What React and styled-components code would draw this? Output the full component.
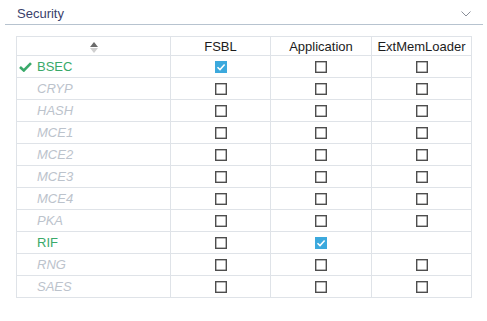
import React from "react";
import styled, { createGlobalStyle } from "styled-components";

const GlobalStyle = createGlobalStyle`
  body {
    margin: 0;
    background: #ffffff;
    font-family: "Liberation Sans", Arial, sans-serif;
  }
`;

const Panel = styled.div`
  width: 487px;
  height: 321px;
  background: #ffffff;
`;

const SectionHeader = styled.div`
  display: flex;
  align-items: center;
  justify-content: space-between;
  height: 25px;
  margin: 0 4px 0 5px;
  padding: 3px 12px 0 12px;
  border-bottom: 1px solid #b7c3cf;
  box-sizing: border-box;
`;

const Title = styled.span`
  font-size: 13px;
  color: #3a416b;
`;

const Table = styled.table`
  border-collapse: collapse;
  margin: 11px 0 0 16px;
  table-layout: fixed;
  width: 456px;
  font-size: 13px;
`;

const Th = styled.th`
  height: 18px;
  padding: 0;
  border: 1px solid #dfe3e8;
  font-weight: normal;
  color: #1c1c1c;
  text-align: center;
  width: ${(p) => p.$w}px;
  vertical-align: middle;
`;

const Td = styled.td`
  height: 21px;
  padding: 0;
  border: 1px solid #dfe3e8;
  text-align: center;
  vertical-align: middle;
`;

const NameCell = styled(Td)`
  text-align: left;
  position: relative;
  padding-left: 20px;
`;

const Name = styled.span`
  color: ${(p) => (p.$on ? "#3aa96a" : "#bcc3cc")};
  font-style: ${(p) => (p.$on ? "normal" : "italic")};
`;

const Tick = styled.svg`
  position: absolute;
  left: 2px;
  top: 6px;
`;

const Box = styled.svg`
  display: inline-block;
  vertical-align: middle;
  margin-top: -2px;
`;

const Chevron = () => (
  <svg width="10" height="6" viewBox="0 0 10 6">
    <path d="M0.5 0.5 L5 5 L9.5 0.5" fill="none" stroke="#8a8f99" strokeWidth="1" />
  </svg>
);

const SortIcon = () => (
  <svg width="8" height="11" viewBox="0 0 8 11" style={{ verticalAlign: "middle" }}>
    <path d="M4 0 L8 5 L0 5 Z" fill="#6b6b6b" />
    <path d="M0 6 L8 6 L4 11 Z" fill="#cfcfcf" />
  </svg>
);

const Checkbox = ({ checked }) => (
  <Box width="12" height="12" viewBox="0 0 12 12">
    {checked ? (
      <>
        <rect x="0" y="0" width="12" height="12" fill="#3ca9dd" />
        <path d="M2.5 6.2 L5 8.6 L9.6 3.6" fill="none" stroke="#ffffff" strokeWidth="1.5" />
      </>
    ) : (
      <rect x="0.7" y="0.7" width="10.6" height="10.6" fill="#ffffff" stroke="#4e4e4e" strokeWidth="1.4" />
    )}
  </Box>
);

const rows = [
  { name: "BSEC", on: true, cells: [true, false, false] },
  { name: "CRYP", cells: [false, false, false] },
  { name: "HASH", cells: [false, false, false] },
  { name: "MCE1", cells: [false, false, false] },
  { name: "MCE2", cells: [false, false, false] },
  { name: "MCE3", cells: [false, false, false] },
  { name: "MCE4", cells: [false, false, false] },
  { name: "PKA", cells: [false, false, false] },
  { name: "RIF", on: true, cells: [false, true, null] },
  { name: "RNG", cells: [false, false, false] },
  { name: "SAES", cells: [false, false, false] },
];

export default function App() {
  return (
    <Panel>
      <GlobalStyle />
      <SectionHeader>
        <Title>Security</Title>
        <Chevron />
      </SectionHeader>
      <Table>
        <thead>
          <tr>
            <Th $w={153}><SortIcon /></Th>
            <Th $w={99}>FSBL</Th>
            <Th $w={100}>Application</Th>
            <Th $w={99}>ExtMemLoader</Th>
          </tr>
        </thead>
        <tbody>
          {rows.map((r) => (
            <tr key={r.name}>
              <NameCell>
                {r.name === "BSEC" && (
                  <Tick width="13" height="10" viewBox="0 0 13 10">
                    <path d="M1 5 L4.8 8.5 L12 1.2" fill="none" stroke="#3aa96a" strokeWidth="2.6" />
                  </Tick>
                )}
                <Name $on={r.on}>{r.name}</Name>
              </NameCell>
              {r.cells.map((c, i) => (
                <Td key={i}>{c !== null && <Checkbox checked={c} />}</Td>
              ))}
            </tr>
          ))}
        </tbody>
      </Table>
    </Panel>
  );
}
